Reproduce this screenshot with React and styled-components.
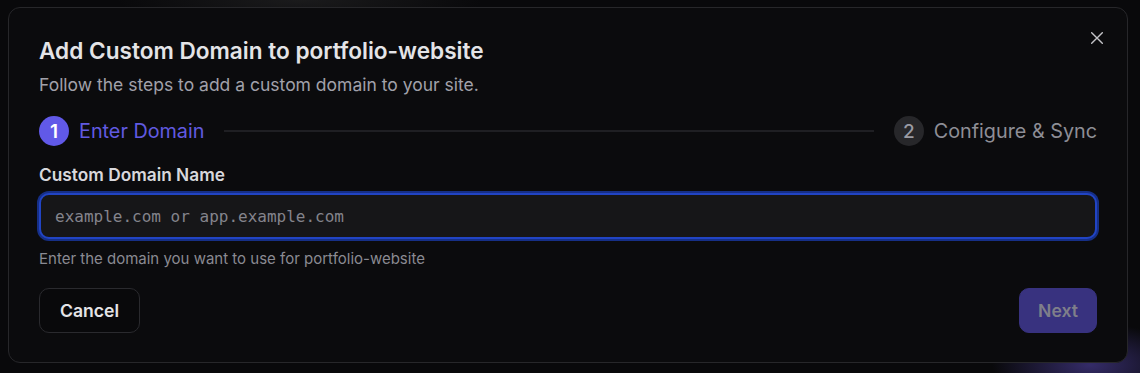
import React from 'react'
import styled, { createGlobalStyle } from 'styled-components'

const GlobalStyle = createGlobalStyle`
    html, body {
        margin:0;
        padding:0;
        height:100%;
    }
    body {
        background-color:#09090b;
        background-image:
            radial-gradient(ellipse 140px 60px at 1090px 365px, rgba(88,72,180,0.55), transparent 70%),
            radial-gradient(ellipse 260px 40px at 300px 0px, rgba(60,60,60,0.35), transparent 70%);
        font-family:Inter, "Noto Sans", sans-serif;
        overflow:hidden;
    }
`

const Page = styled.div`
    width:1140px;
    height:373px;
    padding:7px 12px 10px 8px;
    box-sizing:border-box;
`

const Dialog = styled.div`
    position:relative;
    width:1120px;
    height:356px;
    box-sizing:border-box;
    background-color:#0b0b0d;
    border:1px solid #27272a;
    border-radius:12px;
    padding:30px 30px 29px 30px;
    display:flex;
    flex-direction:column;
`

const CloseButton = styled.button`
    position:absolute;
    top:19px;
    right:19px;
    width:22px;
    height:22px;
    padding:0;
    border:none;
    background:transparent;
    color:#c4c4c8;
    display:flex;
    align-items:center;
    justify-content:center;
    cursor:pointer;
`

const Title = styled.h2`
    margin:0;
    font-size:22.6px;
    line-height:26px;
    font-weight:600;
    color:#e4e4e7;
`

const Subtitle = styled.p`
    margin:9px 0 0 0;
    font-size:17.5px;
    line-height:24px;
    color:#a1a1aa;
`

const Stepper = styled.div`
    margin-top:19px;
    display:flex;
    align-items:center;
    height:30px;
`

const Step = styled.div`
    display:flex;
    align-items:center;
    gap:10px;
`

const StepCircle = styled.span`
    width:30px;
    height:30px;
    border-radius:50%;
    display:flex;
    align-items:center;
    justify-content:center;
    font-size:19px;
    font-weight:${p => p.$active ? 600 : 500};
    background-color:${p => p.$active ? '#6159e8' : '#27272a'};
    color:${p => p.$active ? '#ffffff' : '#9b9ba3'};
`

const StepLabel = styled.span`
    font-size:19.8px;
    color:${p => p.$active ? '#615ae0' : '#8e8e96'};
`

const StepLine = styled.div`
    flex:1;
    height:2px;
    background-color:#1f1f23;
    margin:0 20px;
`

const Field = styled.div`
    margin-top:17px;
    display:flex;
    flex-direction:column;
`

const Label = styled.label`
    font-size:17.3px;
    line-height:24px;
    font-weight:600;
    color:#d8d8dc;
`

const Input = styled.input`
    margin-top:6px;
    height:46px;
    box-sizing:border-box;
    background-color:#161618;
    border:2px solid #2144c4;
    box-shadow:0 0 0 2px #162f86;
    border-radius:10px;
    padding:0 14px;
    font-family:"DejaVu Sans Mono", "Liberation Mono", monospace;
    font-size:16px;
    color:#e4e4e7;
    outline:none;

    &::placeholder {
        color:#84848c;
    }
`

const Hint = styled.p`
    margin:10px 0 0 0;
    font-size:15px;
    line-height:20px;
    color:#8a8a92;
`

const Footer = styled.div`
    margin-top:auto;
    display:flex;
    justify-content:space-between;
    align-items:center;
`

const Button = styled.button`
    height:45px;
    box-sizing:border-box;
    padding:0 ${p => p.$primary ? '18px' : '20px'};
    border-radius:10px;
    font-family:Inter, "Noto Sans", sans-serif;
    font-size:17.6px;
    font-weight:600;
    cursor:pointer;
    border:1px solid ${p => p.$primary ? '#38327f' : '#2a2a2e'};
    background-color:${p => p.$primary ? '#38327f' : '#09090b'};
    color:${p => p.$primary ? '#7f7f8a' : '#e4e4e7'};
`

export default function App() {
    return (
        <>
            <GlobalStyle />
            <Page>
                <Dialog>
                    <CloseButton aria-label="Close">
                        <svg width="12" height="12" viewBox="0 0 12 12" fill="none" stroke="currentColor" strokeWidth="1.4" strokeLinecap="round">
                            <path d="M0.7 0.7 L11.3 11.3 M11.3 0.7 L0.7 11.3" />
                        </svg>
                    </CloseButton>
                    <Title>Add Custom Domain to portfolio-website</Title>
                    <Subtitle>Follow the steps to add a custom domain to your site.</Subtitle>
                    <Stepper>
                        <Step>
                            <StepCircle $active>1</StepCircle>
                            <StepLabel $active>Enter Domain</StepLabel>
                        </Step>
                        <StepLine />
                        <Step>
                            <StepCircle>2</StepCircle>
                            <StepLabel>Configure &amp; Sync</StepLabel>
                        </Step>
                    </Stepper>
                    <Field>
                        <Label htmlFor="domain">Custom Domain Name</Label>
                        <Input id="domain" placeholder="example.com or app.example.com" />
                        <Hint>Enter the domain you want to use for portfolio-website</Hint>
                    </Field>
                    <Footer>
                        <Button>Cancel</Button>
                        <Button $primary disabled>Next</Button>
                    </Footer>
                </Dialog>
            </Page>
        </>
    )
}
